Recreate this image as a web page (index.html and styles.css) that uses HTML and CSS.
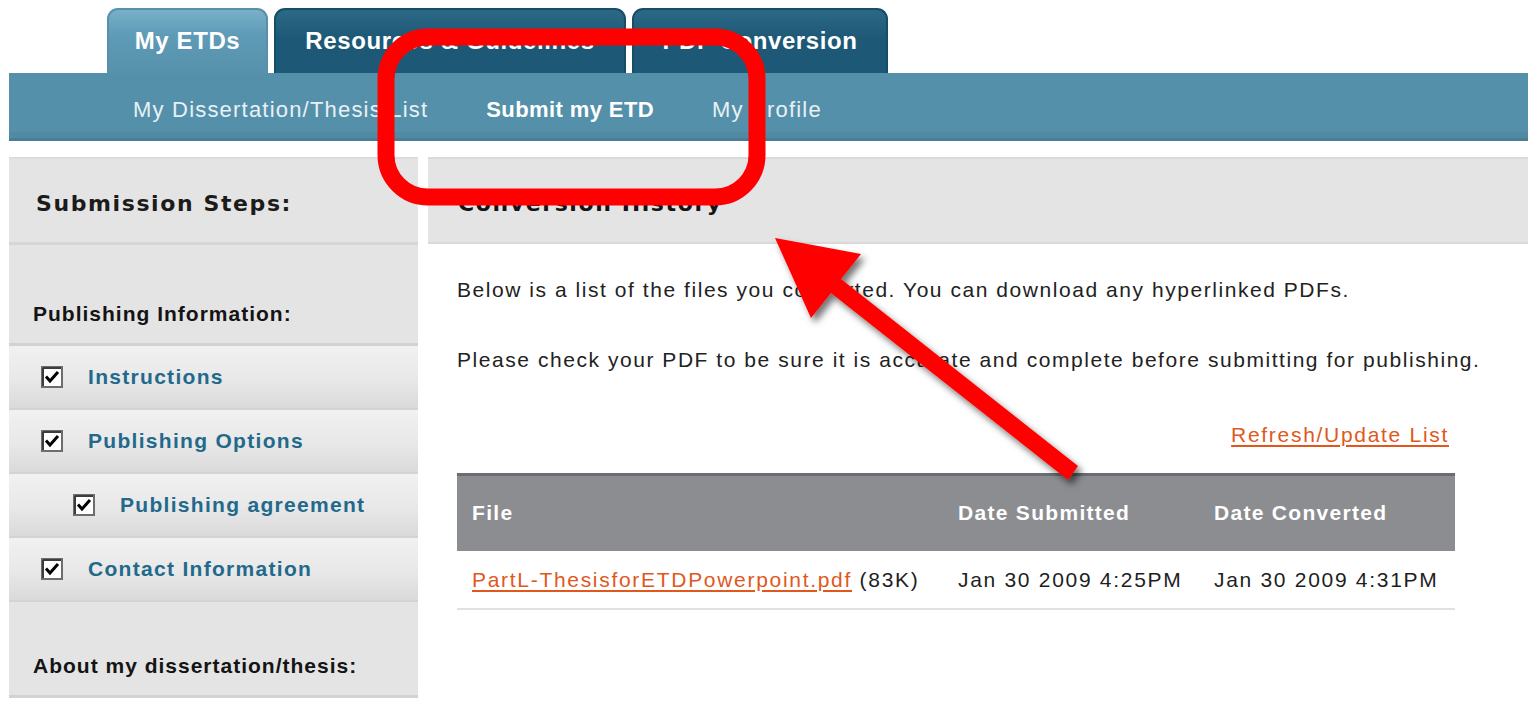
FILE: index.html
```html
<!DOCTYPE html>
<html lang="en">
<head>
<meta charset="utf-8">
<title>Submit my ETD - Conversion History</title>
<link rel="stylesheet" href="styles.css">
</head>
<body>
<div class="page">
  <nav class="tabs">
    <a class="tab tab-active tab-etds">My ETDs</a>
    <a class="tab tab-resources">Resources &amp; Guidelines</a>
    <a class="tab tab-pdf">PDF Conversion</a>
  </nav>
  <div class="subnav">
    <a class="subnav-link">My Dissertation/Thesis List</a>
    <a class="subnav-link subnav-current">Submit my ETD</a>
    <a class="subnav-link">My Profile</a>
  </div>

  <div class="main">
    <aside class="sidebar">
      <div class="side-title">Submission Steps:</div>
      <div class="side-group">Publishing Information:</div>
      <div class="step">
        <span class="check"><svg viewBox="0 0 22 22" width="22" height="22"><rect x="1" y="1" width="20" height="20" fill="#fff" stroke="#6d6d6d" stroke-width="2"/><path d="M2 2h18" stroke="#3c3c3c" stroke-width="2"/><path d="M2 2v18" stroke="#3c3c3c" stroke-width="2"/><path d="M5 10.5l4 4.5 8-9" fill="none" stroke="#000" stroke-width="3"/></svg></span>
        <a class="step-link">Instructions</a>
      </div>
      <div class="step">
        <span class="check"><svg viewBox="0 0 22 22" width="22" height="22"><rect x="1" y="1" width="20" height="20" fill="#fff" stroke="#6d6d6d" stroke-width="2"/><path d="M2 2h18" stroke="#3c3c3c" stroke-width="2"/><path d="M2 2v18" stroke="#3c3c3c" stroke-width="2"/><path d="M5 10.5l4 4.5 8-9" fill="none" stroke="#000" stroke-width="3"/></svg></span>
        <a class="step-link">Publishing Options</a>
      </div>
      <div class="step step-sub">
        <span class="check"><svg viewBox="0 0 22 22" width="22" height="22"><rect x="1" y="1" width="20" height="20" fill="#fff" stroke="#6d6d6d" stroke-width="2"/><path d="M2 2h18" stroke="#3c3c3c" stroke-width="2"/><path d="M2 2v18" stroke="#3c3c3c" stroke-width="2"/><path d="M5 10.5l4 4.5 8-9" fill="none" stroke="#000" stroke-width="3"/></svg></span>
        <a class="step-link">Publishing agreement</a>
      </div>
      <div class="step">
        <span class="check"><svg viewBox="0 0 22 22" width="22" height="22"><rect x="1" y="1" width="20" height="20" fill="#fff" stroke="#6d6d6d" stroke-width="2"/><path d="M2 2h18" stroke="#3c3c3c" stroke-width="2"/><path d="M2 2v18" stroke="#3c3c3c" stroke-width="2"/><path d="M5 10.5l4 4.5 8-9" fill="none" stroke="#000" stroke-width="3"/></svg></span>
        <a class="step-link">Contact Information</a>
      </div>
      <div class="side-group side-group-last">About my dissertation/thesis:</div>
    </aside>

    <section class="content">
      <h1 class="content-head">Conversion History</h1>
      <div class="content-body">
        <p class="intro">Below is a list of the files you converted. You can download any hyperlinked PDFs.</p>
        <p class="intro">Please check your PDF to be sure it is accurate and complete before submitting for publishing.</p>
        <div class="refresh-row"><a class="link">Refresh/Update List</a></div>
        <table class="history">
          <thead>
            <tr><th class="col-file">File</th><th class="col-date">Date Submitted</th><th class="col-date">Date Converted</th></tr>
          </thead>
          <tbody>
            <tr><td><a class="link">PartL-ThesisforETDPowerpoint.pdf</a> (83K)</td><td>Jan 30 2009 4:25PM</td><td>Jan 30 2009 4:31PM</td></tr>
          </tbody>
        </table>
      </div>
    </section>
  </div>

  <!-- hand-drawn callout over the page -->
  <svg class="callout" width="1528" height="703" viewBox="0 0 1528 703">
    <defs>
      <filter id="shade" x="-20%" y="-20%" width="140%" height="140%">
        <feDropShadow dx="4" dy="5" stdDeviation="3.5" flood-color="#000" flood-opacity="0.55"/>
      </filter>
    </defs>
    <rect x="386" y="37" width="371" height="160" rx="42" ry="42" fill="none" stroke="#ff0000" stroke-width="17"/>
    <polygon filter="url(#shade)" fill="#ff0000" points="775,238 861,254 841,279 1078,466 1068,480 831,293 811,318"/>
  </svg>
</div>
</body>
</html>
```

FILE: styles.css
```css
* { box-sizing: border-box; }

html, body {
  margin: 0;
  padding: 0;
  background: #fff;
}

body {
  font-family: "Liberation Sans", Arial, sans-serif;
  color: #1e1e1e;
  width: 1528px;
  height: 703px;
  overflow: hidden;
}

.page {
  position: relative;
  width: 1528px;
  height: 703px;
}

a { text-decoration: none; cursor: pointer; }

/* ---------- top tabs ---------- */
.tabs {
  display: flex;
  align-items: flex-end;
  gap: 6px;
  padding: 8px 0 0 107px;
  height: 73px;
}

.tab {
  height: 65px;
  display: flex;
  align-items: center;
  justify-content: center;
  font-size: 24px;
  font-weight: bold;
  letter-spacing: 0.6px;
  color: #fff;
  border-radius: 11px 11px 0 0;
  background: linear-gradient(#2c6986, #1d5977 45%, #1d5876);
  border: 2px solid #184d68;
  border-bottom: none;
  padding-bottom: 2px;
}

.tab-etds { width: 161px; }
.tab-resources { width: 352px; }
.tab-pdf { width: 256px; }

.tab-active {
  background: linear-gradient(#78b0c8, #5e9bb6 40%, #5791ac);
  border-color: #5890aa;
}

/* ---------- sub navigation ---------- */
.subnav {
  margin-left: 9px;
  height: 68px;
  background: #5590ab;
  border-bottom: 3px solid #4a7d96;
  box-shadow: inset 0 -6px 0 #5289a3;
  display: flex;
  align-items: center;
  gap: 58px;
  padding: 8px 0 0 124px;
}

.subnav-link {
  font-size: 22px;
  letter-spacing: 1.2px;
  color: #e8f1f5;
}

.subnav-current {
  font-weight: bold;
  letter-spacing: 0.4px;
  color: #fff;
}

/* ---------- main area ---------- */
.main {
  display: flex;
  gap: 10px;
  margin: 16px 0 0 9px;
}

.sidebar {
  width: 409px;
  flex: none;
  background: #e4e4e4;
}

.side-title {
  height: 88px;
  display: flex;
  align-items: center;
  padding: 5px 0 0 27px;
  font-family: "DejaVu Sans", Verdana, sans-serif;
  font-size: 22px;
  font-weight: bold;
  letter-spacing: 1.6px;
  color: #1b1b1b;
  border-top: 2px solid #dcdcdc;
  border-bottom: 3px solid #d6d6d6;
}

.side-group {
  height: 101px;
  display: flex;
  align-items: flex-end;
  padding: 0 0 17px 24px;
  font-size: 21px;
  font-weight: bold;
  letter-spacing: 1px;
  color: #141414;
  border-bottom: 3px solid #d2d2d2;
}

.side-group-last {
  height: 96px;
  padding-bottom: 17px;
}

.step {
  height: 64px;
  display: flex;
  align-items: center;
  gap: 25px;
  padding: 0 0 0 32px;
  background: linear-gradient(#f1f1f1, #e8e8e8 55%, #dadada);
  border-bottom: 2px solid #d3d3d3;
}

.step:last-of-type { border-bottom: none; }

.step-sub { padding-left: 64px; }

.check {
  display: flex;
  width: 22px;
  height: 22px;
}

.step-link {
  font-size: 21px;
  font-weight: bold;
  letter-spacing: 1.3px;
  color: #22698b;
}

/* ---------- content ---------- */
.content {
  flex: 1;
  min-width: 0;
}

.content-head {
  margin: 0;
  height: 87px;
  display: flex;
  align-items: center;
  padding: 6px 0 0 30px;
  background: #e4e4e4;
  border-top: 2px solid #dadada;
  border-bottom: 2px solid #d9d9d9;
  font-family: "DejaVu Sans", Verdana, sans-serif;
  font-size: 22px;
  font-weight: bold;
  letter-spacing: 1.6px;
  color: #151515;
}

.content-body {
  padding: 0 73px 0 29px;
}

.intro {
  margin: 0;
  height: 70px;
  display: flex;
  align-items: center;
  font-size: 21px;
  letter-spacing: 1.55px;
  white-space: nowrap;
  color: #222;
}

.intro:first-child { margin-top: 11px; }

.refresh-row {
  display: flex;
  justify-content: flex-end;
  padding: 1px 6px 0 0;
  height: 78px;
  align-items: center;
}

.link {
  color: #e0581c;
  text-decoration: underline;
  text-underline-offset: 3px;
  font-size: 21px;
  letter-spacing: 1.7px;
}

.history {
  width: 998px;
  border-collapse: collapse;
  font-size: 21px;
}

.history th {
  height: 76px;
  background: #8c8d91;
  border-top: 3px solid #6c6d71;
  color: #fff;
  font-weight: bold;
  text-align: left;
  padding: 0 0 0 15px;
  letter-spacing: 1.3px;
}

.col-file { width: 486px; }
.col-date { width: 256px; }

.history td {
  height: 58px;
  padding: 1px 0 0 15px;
  border-bottom: 2px solid #e1e1e1;
  color: #1e1e1e;
  white-space: nowrap;
  letter-spacing: 1.7px;
}

/* ---------- callout overlay ---------- */
.callout {
  position: absolute;
  left: 0;
  top: 0;
  pointer-events: none;
}
```
